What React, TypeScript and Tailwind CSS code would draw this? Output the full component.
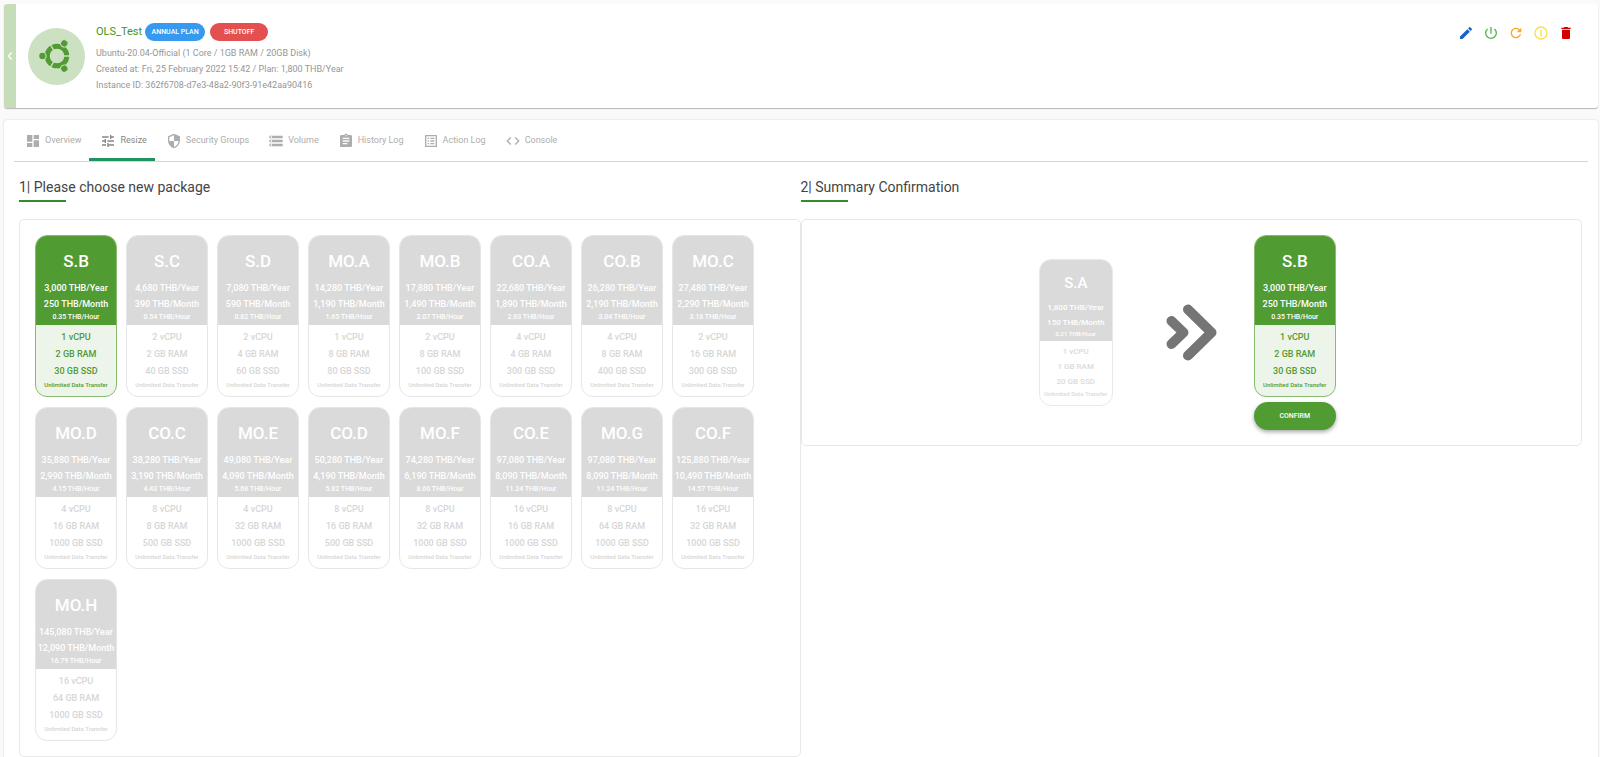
import React, { useState } from "react";
import {
  MdDashboard, MdTune, MdSecurity, MdStorage, MdAssignment, MdListAlt, MdCode,
  MdEdit, MdPowerSettingsNew, MdRefresh, MdDelete, MdChevronLeft,
} from "react-icons/md";

type Plan = { name: string; year: string; month: string; hour: string; cpu: number; ram: number; ssd: number };

const plan = (name: string, year: string, month: string, hour: string, cpu: number, ram: number, ssd: number): Plan => ({
  name, year, month, hour, cpu, ram, ssd,
});

const currentPlan = plan("S.A", "1,800", "150", "0.21", 1, 1, 20);

const plans: Plan[] = [
  plan("S.B", "3,000", "250", "0.35", 1, 2, 30),
  plan("S.C", "4,680", "390", "0.54", 2, 2, 40),
  plan("S.D", "7,080", "590", "0.82", 2, 4, 60),
  plan("MO.A", "14,280", "1,190", "1.65", 1, 8, 80),
  plan("MO.B", "17,880", "1,490", "2.07", 2, 8, 100),
  plan("CO.A", "22,680", "1,890", "2.63", 4, 4, 300),
  plan("CO.B", "26,280", "2,190", "3.04", 4, 8, 400),
  plan("MO.C", "27,480", "2,290", "3.18", 2, 16, 300),
  plan("MO.D", "35,880", "2,990", "4.15", 4, 16, 1000),
  plan("CO.C", "38,280", "3,190", "4.43", 8, 8, 500),
  plan("MO.E", "49,080", "4,090", "5.68", 4, 32, 1000),
  plan("CO.D", "50,280", "4,190", "5.82", 8, 16, 500),
  plan("MO.F", "74,280", "6,190", "8.60", 8, 32, 1000),
  plan("CO.E", "97,080", "8,090", "11.24", 16, 16, 1000),
  plan("MO.G", "97,080", "8,090", "11.24", 8, 64, 1000),
  plan("CO.F", "125,880", "10,490", "14.57", 16, 32, 1000),
  plan("MO.H", "145,080", "12,090", "16.79", 16, 64, 1000),
];

const tabs = [
  { label: "Overview", Icon: MdDashboard },
  { label: "Resize", Icon: MdTune },
  { label: "Security Groups", Icon: MdSecurity },
  { label: "Volume", Icon: MdStorage },
  { label: "History Log", Icon: MdAssignment },
  { label: "Action Log", Icon: MdListAlt },
  { label: "Console", Icon: MdCode },
];

function PlanFace({ plan, active = false }: { plan: Plan; active?: boolean }) {
  return (
    <span
      className={`flex w-[82px] flex-col overflow-hidden rounded-xl border text-center font-medium whitespace-nowrap ${
        active ? "border-[#86bb70] bg-[#edf4ea] text-[#519b33]" : "border-[#e6e6e6] bg-white text-[#d6d6d6]"
      }`}
    >
      <span className={`flex flex-col pt-3 pb-[3px] text-white ${active ? "bg-[#519b33]" : "bg-[#dadada]"}`}>
        <span className="mb-[5px] text-[17px] leading-[27px]">{plan.name}</span>
        <span className="text-[9px] leading-4">{plan.year} THB/Year</span>
        <span className="text-[9px] leading-4">{plan.month} THB/Month</span>
        <span className="text-[7px] leading-[10px]">{plan.hour} THB/Hour</span>
      </span>
      <span className="flex flex-col pt-1 pb-1.5 text-[9px] leading-[17px]">
        <span>{plan.cpu} vCPU</span>
        <span>{plan.ram} GB RAM</span>
        <span>{plan.ssd} GB SSD</span>
        <span className="text-[6px] leading-[10px]">Unlimited Data Transfer</span>
      </span>
    </span>
  );
}

function SmallPlanFace({ plan }: { plan: Plan }) {
  return (
    <div className="flex w-[74px] flex-col overflow-hidden rounded-xl border border-[#e9e9e9] bg-white text-center font-medium whitespace-nowrap text-[#dadada]">
      <div className="bg-[#dadada] pt-[11px] pb-[3px] text-white">
        <div className="mb-[5px] text-[15px] leading-6">{plan.name}</div>
        <div className="text-[8px] leading-[15px]">{plan.year} THB/Year</div>
        <div className="text-[8px] leading-[15px]">{plan.month} THB/Month</div>
        <div className="text-[6px] leading-2">{plan.hour} THB/Hour</div>
      </div>
      <div className="pt-[3px] pb-1.5 text-[8px] leading-[15px]">
        <div>{plan.cpu} vCPU</div>
        <div>{plan.ram} GB RAM</div>
        <div>{plan.ssd} GB SSD</div>
        <div className="text-[6px] leading-[10px]">Unlimited Data Transfer</div>
      </div>
    </div>
  );
}

function UbuntuLogo() {
  return (
    <svg viewBox="-18 -18 36 36" className="size-9" aria-hidden="true">
      <circle r="9.8" fill="none" stroke="#519b33" strokeWidth="5" />
      <g stroke="#cbe1c2" strokeWidth="1.4">
        {[0, 120, 240].map((a) => (
          <line key={a} x1="5" y1="0" x2="14" y2="0" transform={`rotate(${a})`} />
        ))}
      </g>
      {[60, 180, 300].map((a) => (
        <circle key={a} cx="14.6" cy="0" r="3.7" fill="#519b33" stroke="#cbe1c2" strokeWidth="1.1" transform={`rotate(${a})`} />
      ))}
    </svg>
  );
}

function Heading({ children }: { children: React.ReactNode }) {
  return (
    <h2 className="mb-[17px] text-[14px] leading-5 text-[#444]">
      <span className="block">{children}</span>
      <span className="mt-[3px] block h-0.5 w-[47px] bg-[#2f8f2f]" />
    </h2>
  );
}

export default function App() {
  const [tab, setTab] = useState("Resize");
  const [selected, setSelected] = useState(plans[0]);

  return (
    <div className="bg-[#fafafa] pt-1 pr-0.5 pl-1 font-[Roboto,sans-serif]">
      <header className="flex h-[104px] overflow-hidden rounded-[3px] bg-white shadow-[0_1px_1px_#b5b5b5]">
        <button aria-label="Back" className="flex w-3 shrink-0 items-center justify-center bg-[#c5ddb9] text-white">
          <MdChevronLeft className="size-4 shrink-0" />
        </button>
        <div className="ml-3 flex size-[57px] shrink-0 items-center justify-center self-center rounded-full bg-[#cbe1c2]">
          <UbuntuLogo />
        </div>
        <div className="ml-[11px] pt-[19px] text-[9px] leading-4 text-[#969696]">
          <div className="mb-1 flex items-center">
            <h1 className="mr-[3px] text-[11px] leading-[18px] text-[#3f9420]">OLS_Test</h1>
            <span className="mr-[5px] h-[18px] w-[60px] rounded-full bg-[#369af0] text-center text-[7px] leading-[18px] font-medium text-white">ANNUAL PLAN</span>
            <span className="h-[18px] w-[58px] rounded-full bg-[#e45050] text-center text-[7px] leading-[18px] font-medium text-white">SHUTOFF</span>
          </div>
          <p>Ubuntu-20.04-Official (1 Core / 1GB RAM / 20GB Disk)</p>
          <p>Created at: Fri, 25 February 2022 15:42 / Plan: 1,800 THB/Year</p>
          <p>Instance ID: 362f6708-d7e3-48a2-90f3-91e42aa90416</p>
        </div>
        <div className="mt-[21px] mr-6 ml-auto flex items-start gap-[9px]">
          <button aria-label="Edit" className="text-[#1a62c8]"><MdEdit className="size-4" /></button>
          <button aria-label="Power on" className="text-[#4cb748]"><MdPowerSettingsNew className="size-4" /></button>
          <button aria-label="Restart" className="text-[#ffa81f]"><MdRefresh className="size-4" /></button>
          <button aria-label="Suspend" className="text-[#f8e04a]">
            <svg viewBox="0 0 24 24" className="size-4" fill="none" stroke="currentColor" strokeWidth="2">
              <circle cx="12" cy="12" r="9" />
              <path d="M12 7v10" />
            </svg>
          </button>
          <button aria-label="Delete" className="text-[#d40000]"><MdDelete className="size-4" /></button>
        </div>
      </header>

      <main className="mt-3 rounded-t-[3px] bg-white px-[10px] shadow-[0_0_2px_#ccc]">
        <nav className="flex h-[42px] border-b border-[#d5d5d5]" role="tablist">
          {tabs.map(({ label, Icon }) => (
            <button
              key={label}
              role="tab"
              aria-selected={tab === label}
              onClick={() => setTab(label)}
              className={`flex h-[41px] items-center gap-1 border-b-3 pt-[3px] pr-2 pl-[11px] text-[9px] ${
                tab === label ? "border-[#249160] text-[#868686]" : "border-transparent text-[#adadad]"
              }`}
            >
              <Icon className="size-4" />
              {label}
            </button>
          ))}
        </nav>

        <div className="grid grid-cols-2 items-start pt-[15px] pr-1.5 pl-[5px]">
          <section>
            <Heading>1| Please choose new package</Heading>
            <div className="flex flex-wrap gap-x-[9px] gap-y-[10px] rounded-[5px] border border-[#e8e8e8] p-[15px]">
              {plans.map((p) => (
                <button key={p.name} aria-pressed={p === selected} onClick={() => setSelected(p)}>
                  <PlanFace plan={p} active={p === selected} />
                </button>
              ))}
            </div>
          </section>
          <section>
            <Heading>2| Summary Confirmation</Heading>
            <div className="flex items-center justify-center rounded-[5px] border border-[#e8e8e8] py-[15px] pr-2">
              <SmallPlanFace plan={currentPlan} />
              <svg viewBox="0 0 51 57" className="mr-[37px] ml-[53px] h-[57px] w-[51px]" fill="none" stroke="#757575" strokeWidth="10" strokeLinecap="round" strokeLinejoin="round" aria-hidden="true">
                <path d="M22 5.500L45.500 28.500L22 51.500" />
                <path d="M5.500 17L17.500 28.500L5.500 40" />
              </svg>
              <div className="flex flex-col items-center gap-[5px]">
                <PlanFace plan={selected} active />
                <button className="h-7 w-full rounded-full bg-[#519b33] text-[7px] font-medium text-white shadow-[0_2px_4px_rgba(0,0,0,0.35)]">CONFIRM</button>
              </div>
            </div>
          </section>
        </div>
      </main>
    </div>
  );
}
